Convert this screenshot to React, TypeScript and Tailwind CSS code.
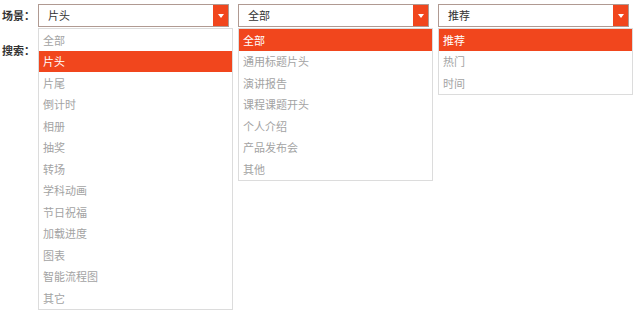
import { useState } from 'react';

type SelectProps = {
  value: string;
  options: string[];
};

function Dropdown({ value, options }: SelectProps) {
  const [open] = useState(true);

  return (
    <div className="relative w-[191px] h-[23px]">
      <div className="flex h-full border border-[#b09a92] bg-white">
        <div className="flex-1 flex items-center pl-[9px] text-[11px] text-[#333]">{value}</div>
        <div className="w-[15px] h-full bg-[#f1461d] flex items-center justify-center">
          <span className="block w-0 h-0 border-l-[3px] border-r-[3px] border-t-[4px] border-l-transparent border-r-transparent border-t-white" />
        </div>
      </div>
      {open && (
        <ul className="absolute left-0 top-[24px] w-[195px] border border-[#dcdcdc] bg-white z-10">
          {options.map((opt) => (
            <li
              key={opt}
              className={
                opt === value
                  ? 'h-[21.5px] flex items-center pl-[4px] text-[11px] bg-[#f1461d] text-white'
                  : 'h-[21.5px] flex items-center pl-[4px] text-[11px] text-[#a3a3a3]'
              }
            >
              {opt}
            </li>
          ))}
        </ul>
      )}
    </div>
  );
}

const scenes = ['全部', '片头', '片尾', '倒计时', '相册', '抽奖', '转场', '学科动画', '节日祝福', '加载进度', '图表', '智能流程图', '其它'];
const kinds = ['全部', '通用标题片头', '演讲报告', '课程课题开头', '个人介绍', '产品发布会', '其他'];
const orders = ['推荐', '热门', '时间'];

export default function App() {
  return (
    <div
      className="w-[640px] h-[322px] bg-white pt-[4px] pl-[2px]"
      style={{ fontFamily: '"Noto Sans CJK SC", "Noto Sans", sans-serif' }}
    >
      <div className="flex items-center">
        <div className="w-[36px] text-[11px] font-bold text-[#333]">场景：</div>
        <div className="flex gap-[9px]">
          <Dropdown value="片头" options={scenes} />
          <Dropdown value="全部" options={kinds} />
          <Dropdown value="推荐" options={orders} />
        </div>
      </div>
      <div className="mt-[15px] text-[11px] font-bold text-[#333]">搜索：</div>
    </div>
  );
}
